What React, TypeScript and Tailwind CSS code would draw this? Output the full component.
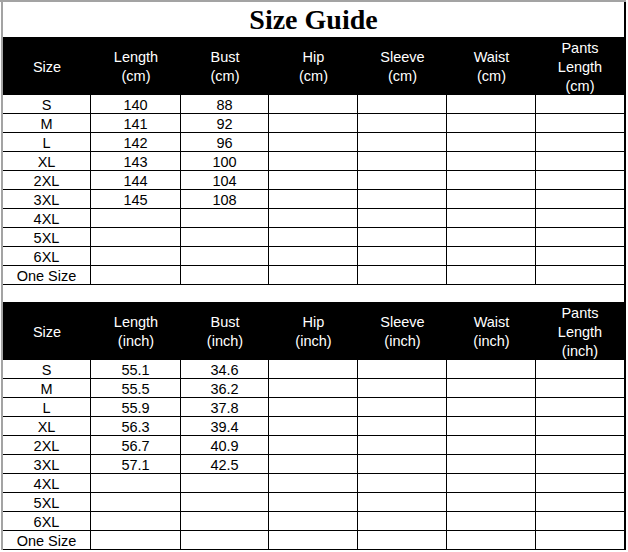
const widths = ["w-[88px]", "w-[90px]", "w-[88px]", "w-[89px]", "w-[89px]", "w-[89px]", "w-[88px]"]

const sizes = ["S", "M", "L", "XL", "2XL", "3XL", "4XL", "5XL", "6XL", "One Size"]

const cmRows: string[][] = [
  ["140", "88"],
  ["141", "92"],
  ["142", "96"],
  ["143", "100"],
  ["144", "104"],
  ["145", "108"],
]

const inchRows: string[][] = [
  ["55.1", "34.6"],
  ["55.5", "36.2"],
  ["55.9", "37.8"],
  ["56.3", "39.4"],
  ["56.7", "40.9"],
  ["57.1", "42.5"],
]

function HeaderRow({ unit }: { unit: string }) {
  const heads: string[][] = [
    ["Size"],
    ["Length", `(${unit})`],
    ["Bust", `(${unit})`],
    ["Hip", `(${unit})`],
    ["Sleeve", `(${unit})`],
    ["Waist", `(${unit})`],
    ["Pants", "Length", `(${unit})`],
  ]
  return (
    <div className="flex h-[58px] bg-black text-white">
      {heads.map((lines, i) => (
        <div
          key={i}
          className={`${widths[i]} flex flex-col items-center justify-center pt-[2px] leading-[19px]`}
        >
          {lines.map((l) => (
            <span key={l}>{l}</span>
          ))}
        </div>
      ))}
    </div>
  )
}

function DataRows({ values }: { values: string[][] }) {
  return (
    <>
      {sizes.map((size, r) => {
        const cells = [size, values[r]?.[0] ?? "", values[r]?.[1] ?? "", "", "", "", ""]
        return (
          <div key={size} className="flex h-[19px]">
            {cells.map((c, i) => (
              <div
                key={i}
                className={`${widths[i]} flex items-center justify-center border-b border-black pt-[1px] leading-[18px] ${i < 6 ? "border-r" : ""}`}
              >
                {c}
              </div>
            ))}
          </div>
        )
      })}
    </>
  )
}

export default function App() {
  return (
    <div className="h-[552px] w-[628px] bg-white">
      <div
        className="h-[550px] w-[626px] border-t-2 border-[#a3a3a3] pl-[1px] text-[14.5px] text-black"
        style={{ fontFamily: '"Liberation Sans", Arial, sans-serif' }}
      >
        <div className="flex h-[548px] border-l-2 border-[#a3a3a3]">
          <div className="flex w-[621px] flex-col">
            <div
              className="flex h-[35px] items-center justify-center pt-[1px] text-[28px] font-bold"
              style={{ fontFamily: '"Liberation Serif", "Times New Roman", serif' }}
            >
              Size Guide
            </div>
            <HeaderRow unit="cm" />
            <DataRows values={cmRows} />
            <div className="h-[17px]" />
            <HeaderRow unit="inch" />
            <DataRows values={inchRows} />
          </div>
          <div className="w-[2px] bg-black" />
        </div>
      </div>
    </div>
  )
}
